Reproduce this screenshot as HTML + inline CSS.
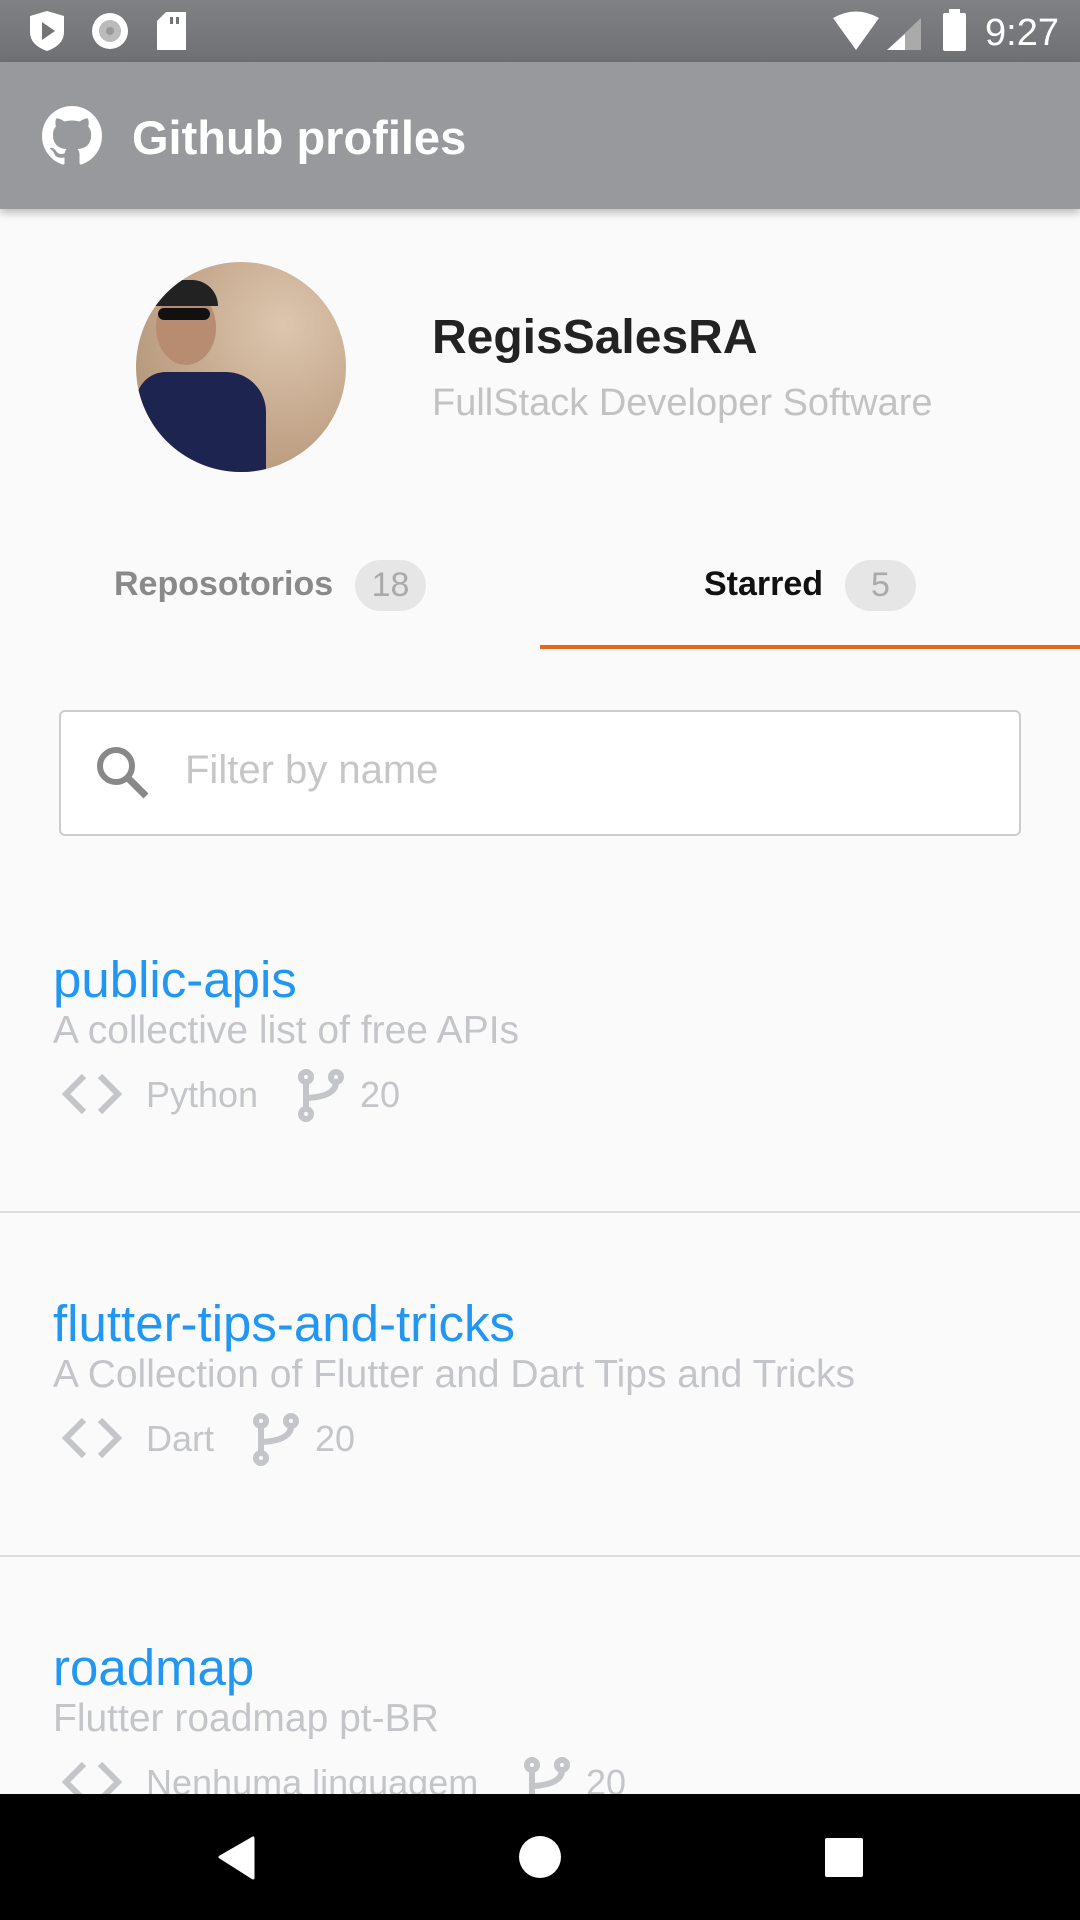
<!DOCTYPE html>
<html><head><meta charset="utf-8"><style>
*{margin:0;padding:0;box-sizing:border-box}
body{width:1080px;height:1920px;background:#fafafa;font-family:"Liberation Sans",sans-serif;position:relative;overflow:hidden}
.abs{position:absolute;white-space:nowrap}
.title{color:#2196f3;font-size:51px;left:53px}
.desc{color:#c3c5c8;font-size:39px;left:53px}
.meta{color:#c3c5c8;font-size:36px}
.div{position:absolute;left:0;width:1080px;height:2px;background:#dcdcdc}
</style></head><body>
<div class="abs" style="left:0;top:0;width:1080px;height:62px;background:linear-gradient(#808184,#6f7073)"></div>
<svg class="abs" style="left:0;top:0" width="1080" height="62">
<path d="M30 16 L47 11 L64 16 L64 32 Q64 45 47 51 Q30 45 30 32Z" fill="#fff"/><path d="M42 22 L55 31 L42 40Z" fill="#737476"/>
<circle cx="110" cy="31" r="18" fill="#fff"/><circle cx="110" cy="31" r="11" fill="#bbb"/><circle cx="110" cy="31" r="4" fill="#999"/>
<path d="M166 12 L186 12 L186 50 L157 50 L157 21Z" fill="#fff"/><rect x="170" y="17" width="3" height="7" fill="#737476"/><rect x="176" y="17" width="3" height="7" fill="#737476"/>
<path d="M833 18 Q856 5 879 18 L856 50Z" fill="#fff"/>
<path d="M921 18 L921 50 L887 50Z" fill="#aaa"/><path d="M905 34 L905 50 L887 50Z" fill="#fff"/>
<rect x="943" y="13" width="23" height="38" rx="2" fill="#fff"/><rect x="949" y="9" width="11" height="5" fill="#fff"/>
<text x="985" y="45" fill="#fff" font-size="38" font-family="Liberation Sans">9:27</text>
</svg>
<div class="abs" style="left:0;top:62px;width:1080px;height:147px;background:#97999c;box-shadow:0 4px 8px rgba(0,0,0,.25)"></div>
<svg class="abs" style="left:42px;top:106px" width="60" height="60" viewBox="0 0 16 16"><path fill="#fff" d="M8 0C3.58 0 0 3.58 0 8c0 3.54 2.29 6.53 5.47 7.59.4.07.55-.17.55-.38 0-.19-.01-.82-.01-1.49-2.01.37-2.53-.49-2.690-.94-.09-.23-.48-.94-.82-1.130-.28-.15-.68-.52-.01-.53.63-.01 1.08.58 1.23.82.72 1.21 1.87.87 2.33.66.07-.52.28-.87.51-1.07-1.78-.2-3.64-.89-3.64-3.95 0-.87.31-1.59.82-2.15-.08-.2-.36-1.02.08-2.12 0 0 .67-.21 2.2.82.64-.18 1.32-.27 2-.27.68 0 1.36.09 2 .27 1.53-1.04 2.2-.82 2.2-.82.44 1.1.16 1.92.08 2.12.51.56.82 1.27.82 2.15 0 3.07-1.87 3.75-3.65 3.95.29.25.54.73.54 1.48 0 1.07-.01 1.93-.01 2.2 0 .21.15.46.55.38A8.013 8.013 0 0016 8c0-4.42-3.58-8-8-8z"/></svg>
<div class="abs" style="left:132px;top:110px;font-size:47px;color:#fff;font-weight:bold">Github profiles</div>
<div class="abs" style="left:136px;top:262px;width:210px;height:210px;border-radius:50%;background:radial-gradient(circle at 70% 30%,#dcc6ae,#c0a286 60%,#a88a70);overflow:hidden">
<div style="position:absolute;left:0;top:110px;width:130px;height:110px;background:#1d2450;border-radius:30px 40px 0 0"></div>
<div style="position:absolute;left:20px;top:28px;width:60px;height:75px;background:#b88c70;border-radius:50%"></div>
<div style="position:absolute;left:16px;top:18px;width:66px;height:26px;background:#222;border-radius:35px 35px 0 0"></div>
<div style="position:absolute;left:22px;top:46px;width:52px;height:12px;background:#111;border-radius:6px"></div>
</div>
<div class="abs" style="left:432px;top:310px;font-size:48px;font-weight:bold;color:#222">RegisSalesRA</div>
<div class="abs" style="left:432px;top:382px;font-size:38px;color:#c2c2c2">FullStack Developer Software</div>
<div class="abs" style="left:114px;top:565px;font-size:34px;color:#8a8a8a;font-weight:bold">Reposotorios</div>
<div class="abs" style="left:355px;top:560px;width:71px;height:51px;border-radius:26px;background:#e6e6e6;color:#aaa;font-size:34px;text-align:center;line-height:51px">18</div>
<div class="abs" style="left:704px;top:565px;font-size:34px;color:#111;font-weight:bold">Starred</div>
<div class="abs" style="left:845px;top:560px;width:71px;height:51px;border-radius:26px;background:#e6e6e6;color:#aaa;font-size:34px;text-align:center;line-height:51px">5</div>
<div class="abs" style="left:540px;top:645px;width:540px;height:4px;background:#e8661a"></div>
<div class="abs" style="left:59px;top:710px;width:962px;height:126px;border:2px solid #ccc;border-radius:6px;background:#fff"></div>
<svg class="abs" style="left:90px;top:740px" width="64" height="64"><circle cx="26" cy="26" r="16" fill="none" stroke="#888" stroke-width="6"/><path d="M38 38 L56 56" stroke="#888" stroke-width="7"/></svg>
<div class="abs" style="left:185px;top:748px;font-size:40px;color:#c6c6c6">Filter by name</div>

<div class="abs title" style="top:950px">public-apis</div>
<div class="abs desc" style="top:1009px">A collective list of free APIs</div>
<svg class="abs" style="left:58px;top:1072px" width="70" height="46"><path d="M26 4 L8 22 L26 40 M42 4 L60 22 L42 40" fill="none" stroke="#c3c5c8" stroke-width="6"/></svg>
<div class="abs meta" style="left:146px;top:1074px">Python</div>
<svg class="abs" style="left:296px;top:1068px" width="52" height="56"><g fill="none" stroke="#c3c5c8" stroke-width="6"><circle cx="10" cy="9" r="5"/><circle cx="40" cy="9" r="5"/><circle cx="10" cy="46" r="5"/><path d="M10 14 L10 41 M40 14 Q40 28 12 30"/></g></svg>
<div class="abs meta" style="left:360px;top:1074px">20</div>
<div class="div" style="top:1211px"></div>

<div class="abs title" style="top:1294px">flutter-tips-and-tricks</div>
<div class="abs desc" style="top:1353px">A Collection of Flutter and Dart Tips and Tricks</div>
<svg class="abs" style="left:58px;top:1416px" width="70" height="46"><path d="M26 4 L8 22 L26 40 M42 4 L60 22 L42 40" fill="none" stroke="#c3c5c8" stroke-width="6"/></svg>
<div class="abs meta" style="left:146px;top:1418px">Dart</div>
<svg class="abs" style="left:251px;top:1412px" width="52" height="56"><g fill="none" stroke="#c3c5c8" stroke-width="6"><circle cx="10" cy="9" r="5"/><circle cx="40" cy="9" r="5"/><circle cx="10" cy="46" r="5"/><path d="M10 14 L10 41 M40 14 Q40 28 12 30"/></g></svg>
<div class="abs meta" style="left:315px;top:1418px">20</div>
<div class="div" style="top:1555px"></div>

<div class="abs title" style="top:1638px">roadmap</div>
<div class="abs desc" style="top:1697px">Flutter roadmap pt-BR</div>
<svg class="abs" style="left:58px;top:1760px" width="70" height="46"><path d="M26 4 L8 22 L26 40 M42 4 L60 22 L42 40" fill="none" stroke="#c3c5c8" stroke-width="6"/></svg>
<div class="abs meta" style="left:146px;top:1762px">Nenhuma linguagem</div>
<svg class="abs" style="left:522px;top:1756px" width="52" height="56"><g fill="none" stroke="#c3c5c8" stroke-width="6"><circle cx="10" cy="9" r="5"/><circle cx="40" cy="9" r="5"/><circle cx="10" cy="46" r="5"/><path d="M10 14 L10 41 M40 14 Q40 28 12 30"/></g></svg>
<div class="abs meta" style="left:586px;top:1762px">20</div>

<div class="abs" style="left:0;top:1794px;width:1080px;height:126px;background:#000"></div>
<svg class="abs" style="left:0;top:1794px" width="1080" height="126"><path d="M253 44 L253 84 L220 63Z" fill="#fff" stroke="#fff" stroke-width="3" stroke-linejoin="round"/><circle cx="540" cy="63" r="21" fill="#fff"/><rect x="825" y="44" width="38" height="39" rx="2" fill="#fff"/></svg>
</body></html>
